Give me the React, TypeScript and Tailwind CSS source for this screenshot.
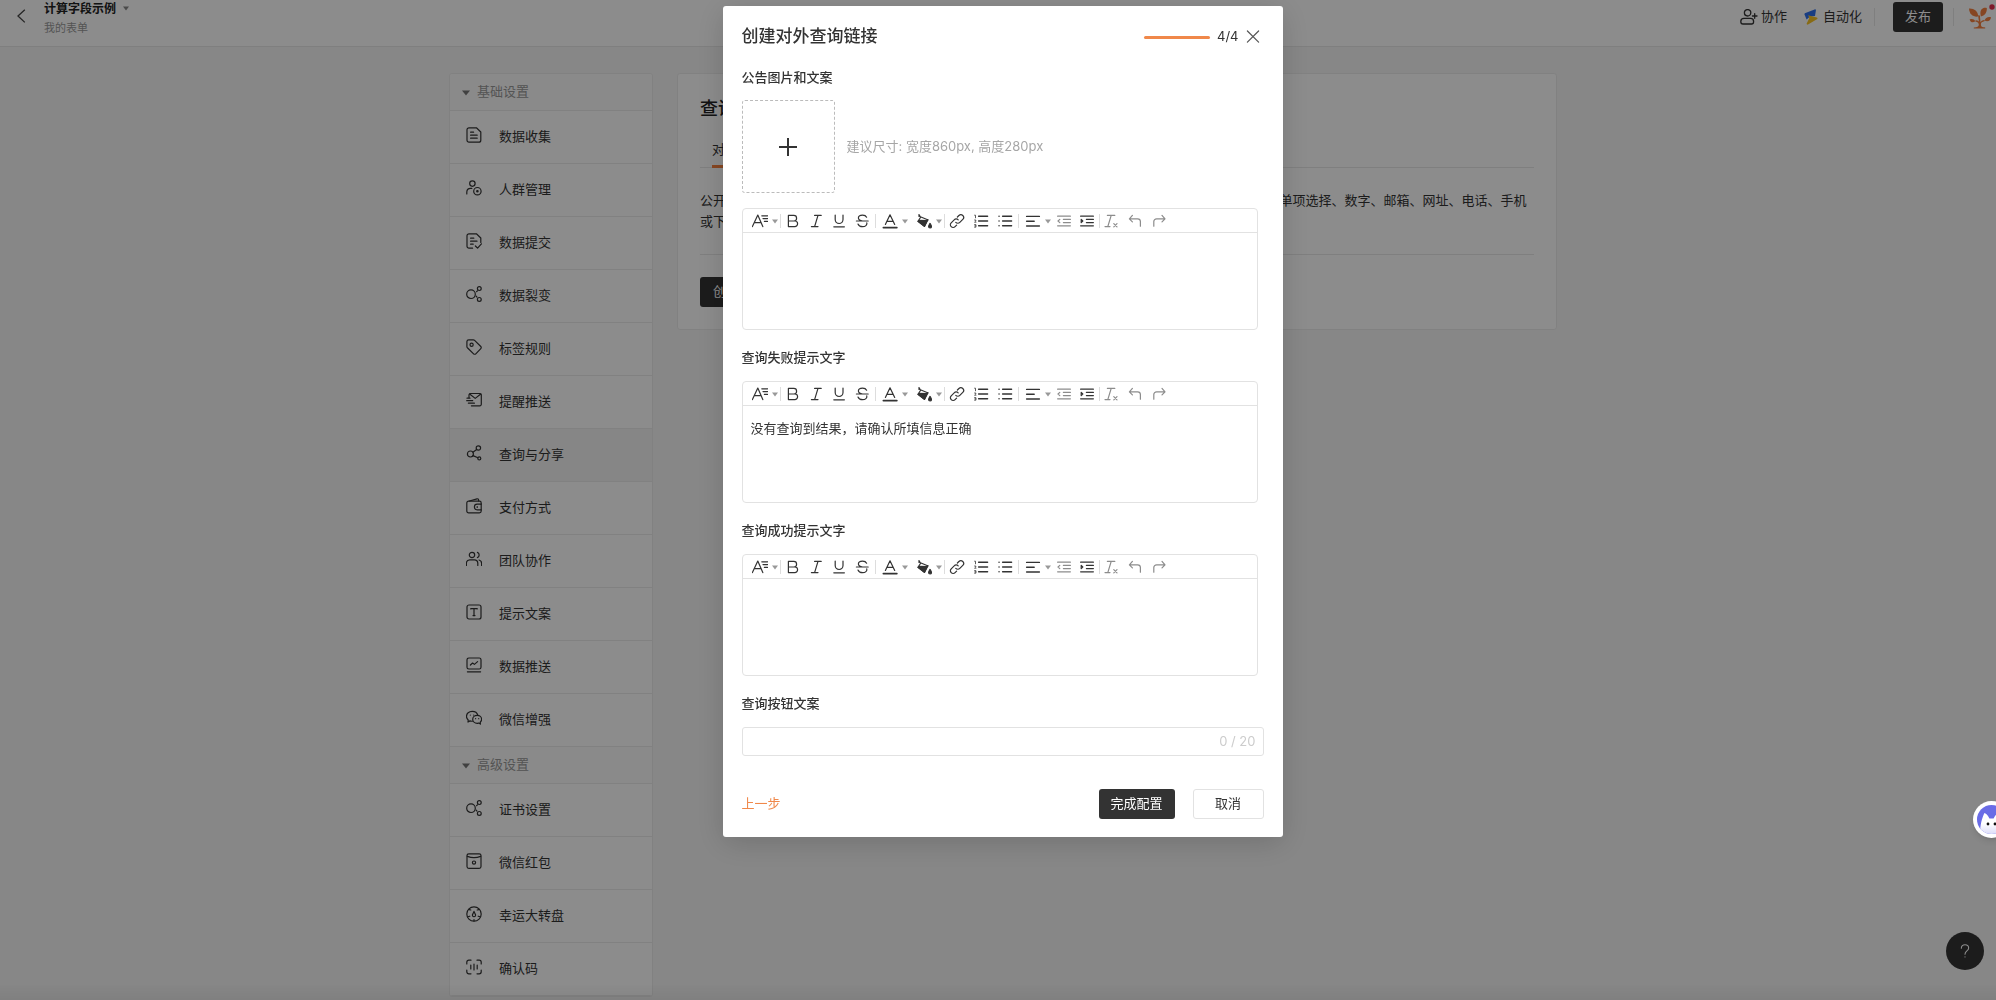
import React from "react";

type IconProps = { children: React.ReactNode; className?: string };

/** 16×16 line icon frame shared by the sidebar and the toolbars. */
function Line({ children, className = "size-4" }: IconProps) {
  return (
    <svg
      viewBox="0 0 16 16"
      className={className}
      fill="none"
      stroke="currentColor"
      strokeWidth="1.2"
      strokeLinecap="round"
      strokeLinejoin="round"
      aria-hidden="true"
    >
      {children}
    </svg>
  );
}

const orbit = (
  <>
    <circle cx="5" cy="8.2" r="4.3" />
    <circle cx="13.3" cy="2.6" r="1.9" />
    <circle cx="13.3" cy="13.4" r="1.9" />
    <path d="M11.4 4.8 10.2 6.2M10.2 10.2l1 1.2" strokeDasharray="1.2 1" />
  </>
);

const basicItems = [
  {
    label: "数据收集",
    icon: (
      <>
        <path d="M3 .8h7.4L14.8 5v8.2a2 2 0 0 1-2 2H3a2 2 0 0 1-2-2V2.8a2 2 0 0 1 2-2Z" />
        <path d="M4.6 5.2h3M4.6 8.2h6.6M4.6 11.2h6.6" />
      </>
    ),
  },
  {
    label: "人群管理",
    icon: (
      <>
        <circle cx="6.4" cy="3.6" r="2.7" />
        <path d="M.8 14V12a3.8 3.8 0 0 1 3.8-3.6h1.2" />
        <circle cx="11.4" cy="11.2" r="3.7" />
        <circle cx="11.4" cy="11.2" r=".7" fill="currentColor" />
      </>
    ),
  },
  {
    label: "数据提交",
    icon: (
      <>
        <path d="M6.6 15.2H3a2 2 0 0 1-2-2V2.8a2 2 0 0 1 2-2h7.4L14.8 5v4.4" />
        <path d="M4.6 5.2h3.2M4.6 8.2h6.4M4.6 11.2h2.6M9.4 13l2.2 2.2 3.8-4.4" />
      </>
    ),
  },
  { label: "数据裂变", icon: orbit },
  {
    label: "标签规则",
    icon: (
      <>
        <path d="M.9 2.6A1.8 1.8 0 0 1 2.7.9h4.6c.5 0 1 .2 1.3.5l6.2 6.1c.6.6.6 1.6 0 2.2l-5 5.1c-.6.6-1.6.6-2.2 0L1.4 8.7A1.8 1.8 0 0 1 .9 7.4Z" />
        <circle cx="5.6" cy="5.7" r="1.6" />
      </>
    ),
  },
  {
    label: "提醒推送",
    icon: (
      <>
        <path d="M3 5.8V3a1.5 1.5 0 0 1 1.5-1.5h9.3A1.5 1.5 0 0 1 15.3 3v9.3a1.5 1.5 0 0 1-1.5 1.5H5.4" />
        <path d="m3.6 2 5.6 4.4L14.8 2M1 6.2h3M.7 8.7h6M2.4 11.2h6" />
      </>
    ),
  },
  {
    label: "查询与分享",
    active: true,
    icon: (
      <>
        <circle cx="4.4" cy="9" r="3" />
        <circle cx="12.4" cy="3" r="2.2" />
        <circle cx="13.3" cy="13.4" r="1.5" />
        <path d="m6.9 7.2 3.8-2.8M7 10.6l4.9 2.2" />
      </>
    ),
  },
  {
    label: "支付方式",
    icon: (
      <>
        <path d="M15.2 6.2V5a1.8 1.8 0 0 0-1.8-1.8H2.6A1.8 1.8 0 0 0 .8 5v8a1.8 1.8 0 0 0 1.8 1.8h10.8a1.8 1.8 0 0 0 1.8-1.8v-1.2" />
        <path d="M3.4 3 11 .8c.9-.2 1.6.4 1.6 1.2v1M15.2 6.2h-4a2.8 2.8 0 0 0 0 5.6h4ZM11.2 8.6v.8" />
      </>
    ),
  },
  {
    label: "团队协作",
    icon: (
      <>
        <circle cx="6" cy="4" r="2.7" />
        <path d="M.4 14.4V12A3.4 3.4 0 0 1 3.8 8.8h4.6A3.4 3.4 0 0 1 11.8 12v2.4M11.4 1.4a2.8 2.8 0 0 1 0 5.2M13 9c1.6.4 2.6 1.6 2.6 3.2v2.2" />
      </>
    ),
  },
  {
    label: "提示文案",
    icon: (
      <>
        <rect x="1" y="1" width="14" height="14" rx="2" />
        <path d="M4.8 5V4.6h6.4V5M8 4.6v7M7 11.6h2" />
      </>
    ),
  },
  {
    label: "数据推送",
    icon: (
      <>
        <rect x="1" y="1" width="14" height="11" rx="1.8" />
        <path d="m4.4 8 2.2-2 1.8 1.4 3.2-2.8M1.4 14.8h13.2" />
      </>
    ),
  },
  {
    label: "微信增强",
    icon: (
      <>
        <path d="M6.4 11.2c-.9.1-1.700 0-2.400-.3L2 12l.2-2C1.200 9 .5 7.900.5 6.400.5 3.500 3 1.400 6.200 1.400c2.900 0 5 1.500 5.600 3.800" />
        <path d="M11.200 5.400c2.500 0 4.400 1.700 4.400 3.900 0 1.200-.5 2.200-1.400 2.900l.2 1.900-1.800-1c-.5.1-.9.200-1.400.200-2.500 0-4.500-1.800-4.500-4s2-3.900 4.500-3.900Z" />
        <path d="M4.300 5v.1M7.700 5v.1M9.600 8.600v.1M12.700 8.600v.1" />
      </>
    ),
  },
];

const advancedItems = [
  { label: "证书设置", icon: orbit },
  {
    label: "微信红包",
    icon: (
      <>
        <rect x="1" y=".8" width="14" height="14.600" rx="1.800" />
        <path d="M1.400 3.400c4 1.600 9.200 1.600 13.200 0" />
        <circle cx="8" cy="9.600" r="1.600" />
      </>
    ),
  },
  {
    label: "幸运大转盘",
    icon: (
      <>
        <circle cx="8" cy="8" r="7.200" />
        <path d="M8 5.400 9.400 8.400a1.600 1.600 0 1 1-2.800 0ZM3.200 3.600l1.600.4M12.800 3.600l-1.600.4M2 10.800l1.800-.6M14 10.800l-1.800-.6M8 15v-1.400" />
      </>
    ),
  },
  {
    label: "确认码",
    icon: (
      <path d="M.8 5V3.200A2 2 0 0 1 2.800 1.200H5M11 1.200h2.200a2 2 0 0 1 2 2V5M15.200 11v1.800a2 2 0 0 1-2 2H11M5 14.800H2.800a2 2 0 0 1-2-2V11M4.800 6v4M8 5v6M11.200 6v4" />
    ),
  },
];

type Item = { label: string; icon: React.ReactNode; active?: boolean };

function Group({ title, items }: { title: string; items: Item[] }) {
  return (
    <section>
      <h2 className="border-b border-[#ececec] bg-[#fcfcfc]">
        <button type="button" className="flex h-9 w-full items-center gap-[7px] pl-3 text-[#999]">
          <svg viewBox="0 0 8 6" className="mt-px h-1.5 w-2" fill="#777" aria-hidden="true">
            <path d="M0 .5h8L4 5.500Z" />
          </svg>
          {title}
        </button>
      </h2>
      <ul>
        {items.map((item) => (
          <li key={item.label} className="border-b border-[#ececec]">
            <a
              href="#"
              className={
                item.active
                  ? "flex h-13 items-center gap-[17px] bg-[#f4f4f4] pl-4"
                  : "flex h-13 items-center gap-[17px] bg-white pl-4"
              }
            >
              <Line className="mb-1 size-4">{item.icon}</Line>
              <span>{item.label}</span>
            </a>
          </li>
        ))}
      </ul>
    </section>
  );
}

function Tool({ label, muted, children }: { label: string; muted?: boolean; children: React.ReactNode }) {
  return (
    <button
      type="button"
      aria-label={label}
      className={
        muted
          ? "flex h-full w-[23px] items-center justify-center text-[#8c8c8c]"
          : "flex h-full w-[23px] items-center justify-center text-[#333]"
      }
    >
      <Line>{children}</Line>
    </button>
  );
}

function MenuTool({ label, children }: { label: string; children: React.ReactNode }) {
  return (
    <button
      type="button"
      aria-label={label}
      aria-haspopup="menu"
      className="flex h-full items-center gap-1 pr-0.5 pl-1.5 text-[#333]"
    >
      <Line>{children}</Line>
      <svg viewBox="0 0 6 5" className="mt-0.5 h-[5px] w-1.5" fill="#999" aria-hidden="true">
        <path d="M0 .5h6L3 4.500Z" />
      </svg>
    </button>
  );
}

function Divider() {
  return <span className="h-3.5 w-px bg-[#ddd]" />;
}

function Toolbar() {
  return (
    <div role="toolbar" className="flex h-6 items-center border-b border-[#e2e2e2] pl-[3px]">
      <MenuTool label="字号">
        <path d="M.4 13.600 5.800 2l5 11.600M2.400 9.600h6.800M9.800 2.800h5.800M11 5.600h4.600M12.400 8.400h3.200" />
      </MenuTool>
      <Divider />
      <div className="flex h-full px-px">
        <Tool label="加粗">
          <path d="M3.400 2.400h5.400a2.800 2.800 0 0 1 0 5.600H3.400ZM3.400 8h6.400a2.800 2.800 0 0 1 0 5.600H3.400Z" />
        </Tool>
        <Tool label="斜体">
          <path d="M6.600 2.400h6.600M3.400 13.600H10M10 2.400 6.600 13.600" />
        </Tool>
        <Tool label="下划线">
          <path d="M4.200 2v4.600a3.900 3.900 0 0 0 7.800 0V2M2.800 13.800h10.600" />
        </Tool>
        <Tool label="删除线">
          <path d="M12.600 4.200c-.6-1.200-2-2-4-2-2.400 0-4.200 1.100-4.200 2.900 0 1.900 1.900 2.500 4.200 2.900M2.400 8h11.800M12.800 9.800c.5 2.200-1.400 3.900-4.200 3.900-2.400 0-4-1-4.600-2.700" />
        </Tool>
      </div>
      <Divider />
      <MenuTool label="文字颜色">
        <path d="M3.400 11.400 8 1.800l4.700 9.600M5 8.400h6" />
        <path d="M1.400 14.600h13.400" strokeWidth="1.800" />
      </MenuTool>
      <MenuTool label="背景颜色">
        <path d="M3 1.600 4.600 4.200 2 8.400l6.400 5 3.400-6.800M2.600 3l9.600 4" />
        <path d="M3.200 7.400 11.400 7.600 8.400 13.400 2 8.400ZM14 10.400c1 1.600 1.500 2.200 1.500 3.100a1.400 1.400 0 0 1-2.900 0c0-.9.500-1.500 1.400-3.100Z" fill="currentColor" />
      </MenuTool>
      <Divider />
      <div className="flex h-full gap-px px-px">
        <Tool label="链接">
          <path d="M6.800 9.400a2.800 2.800 0 0 0 4 0l3-3a2.700 2.700 0 0 0-3.900-3.900L8.400 4" />
          <path d="M9.200 6.800a2.800 2.800 0 0 0-4 0l-3 3a2.700 2.700 0 0 0 3.900 3.900l1.500-1.500" />
        </Tool>
        <Tool label="有序列表">
          <path d="M5.600 3.200h9M5.600 8h9M5.600 12.800h9" strokeWidth="1.400" />
          <path d="M1.600 2.200h.9v2.600M1.600 7h1.200v1L1.600 9.200h1.400M1.600 11.600h1.300v2.600H1.600M1.800 12.900h1" strokeWidth=".8" />
        </Tool>
        <Tool label="无序列表">
          <path d="M5.600 3.200h9M5.600 8h9M5.600 12.800h9M2 3.200h.1M2 8h.1M2 12.800h.1" strokeWidth="1.400" />
        </Tool>
      </div>
      <Divider />
      <MenuTool label="对齐">
        <path d="M1.600 3.400h12.800M1.600 8.200h7.600M1.600 13h12.800" strokeWidth="1.400" />
      </MenuTool>
      <Tool label="减少缩进" muted>
        <path d="M1.600 3.200h12.800M7.400 6.400h7M7.400 9.600h7M1.600 12.800h12.800M3.800 6.400 2 8l1.800 1.600" />
      </Tool>
      <Tool label="增加缩进">
        <path d="M1.600 3.200h12.800M7.400 6.400h7M7.400 9.600h7M1.600 12.800h12.800M2.200 6.400 3.800 8 2.200 9.600Z" />
      </Tool>
      <Divider />
      <div className="flex h-full gap-px">
        <Tool label="清除格式" muted>
          <path d="M4.400 2.400h7.400M2 13.600h5M8.200 2.400 4.800 13.600M10.800 10.600l3.200 3.200M14 10.600l-3.200 3.200" />
        </Tool>
        <Tool label="撤销" muted>
          <path d="M5.400 2.400 2.400 5.800l3 3M2.600 5.800h8a2.800 2.800 0 0 1 2.800 2.800v4.600" />
        </Tool>
        <Tool label="重做" muted>
          <path d="m11 2.400 3 3.400-3 3M13.800 5.800H5.600a2.800 2.800 0 0 0-2.800 2.800v4.600" />
        </Tool>
      </div>
    </div>
  );
}

function Editor({ label, text = "" }: { label: string; text?: string }) {
  return (
    <div className="mr-1.5 flex h-[122px] flex-col rounded-sm border border-[#e2e2e2]">
      <Toolbar />
      <textarea
        aria-label={label}
        defaultValue={text}
        className="block w-full grow resize-none px-2 py-3 leading-5 text-[#333] outline-none"
      />
    </div>
  );
}

function Label({ children, htmlFor }: { children: React.ReactNode; htmlFor?: string }) {
  const cls = "mt-[17px] mb-[14px] block leading-5 font-medium text-[#333]";
  return htmlFor ? (
    <label htmlFor={htmlFor} className={cls}>
      {children}
    </label>
  ) : (
    <h3 className={cls}>{children}</h3>
  );
}

function TopBar() {
  return (
    <header className="flex h-[47px] items-start justify-between border-b border-[#e8e8e8] bg-white pl-4">
      <div className="flex">
        <button type="button" aria-label="返回" className="mt-2 flex h-4 w-3 items-center text-[#444]">
          <svg viewBox="0 0 10 16" className="h-4 w-2.5" fill="none" stroke="currentColor" strokeWidth="1.300" aria-hidden="true">
            <path d="M8.800 1.800 2 8l6.800 6.400" />
          </svg>
        </button>
        <div className="ml-4">
          <button type="button" className="flex h-[17px] items-center gap-[7px] text-xs font-bold text-[#222]">
            计算字段示例
            <svg viewBox="0 0 6 5" className="h-[5px] w-1.5" fill="#888" aria-hidden="true">
              <path d="M0 .5h6L3 4.500Z" />
            </svg>
          </button>
          <p className="mt-[3px] text-[11px] leading-4 text-[#999]">我的表单</p>
        </div>
      </div>
      <div className="mt-0.5 flex h-[30px] items-center">
        <button type="button" className="flex items-center gap-[3px]">
          <svg viewBox="0 0 18 16" className="h-4 w-[18px]" fill="none" stroke="currentColor" strokeWidth="1.300" strokeLinecap="round" aria-hidden="true">
            <circle cx="7.600" cy="3.800" r="3.200" />
            <path d="M4 9.400h6.600c1.800 0 3 1.200 3 3 0 1.500-.8 2.600-2 2.600H3c-1.300 0-2.200-1.100-2.200-2.600 0-1.800 1.400-3 3.200-3ZM12.400 7h4.600M14.700 4.700v4.600" />
          </svg>
          协作
        </button>
        <button type="button" className="ml-4 flex items-center gap-1">
          <svg viewBox="0 0 16 16" className="size-4" aria-hidden="true">
            <path d="M1.800 4.200 11.600.4c.8-.3 1.400.3 1.300 1L12 7 7 7.600 3.600 10.400 1.400 5.200Z" fill="#2f6fed" />
            <path d="M5 6.200 13.800 8.400c.7.200.9.900.5 1.500L5 15.600c-.8.300-1.500-.2-1.300-1L6.400 9Z" fill="#f7c325" />
          </svg>
          自动化
        </button>
        <span className="ml-3 h-[18px] w-px bg-[#e8e8e8]" />
        <button type="button" className="ml-[18px] h-[30px] w-[50px] rounded-[3px] bg-[#333] text-white">
          发布
        </button>
        <span className="mx-2.5 h-[18px] w-px bg-[#e8e8e8]" />
        <button type="button" aria-label="账户" className="ml-1 flex w-7 items-center">
          <svg viewBox="0 0 27 26" className="h-[26px] w-[27px]" aria-hidden="true">
            <g fill="#f5803e">
              <path d="M1 4.600c5-.3 9 2.400 9.200 8C5 13.200 1.400 10.600 1 4.600Z" />
              <path d="M12.400 9.400C12.200 5.600 14.800 3 18.800 4c.3 4.600-2.200 8-6 8.400Z" />
              <path d="M1.600 15.400c2.600-1 4.800-.4 5.600 1.800-2 1.800-4.600 1.400-5.600-1.800ZM16.600 16.600c.8-2.800 3.200-4.200 6.400-3.400-.4 3.400-3 5-6.400 3.400Z" />
              <path d="M5.800 24.600h11.400v-1.200c-3.200 0-4.300-.6-4.300-3.400 0-1.200 1-2.200 3.900-3l-.4-1c-2.200.4-3.300 1-3.900 2.200l-.6-6.800-1.800-.2.800 6.200c-1-.8-2-1.200-3.300-1.200l-.3 1.200c2.800.6 3.500 1.800 3.500 3.400 0 2-1.600 2.600-5 2.600Z" />
            </g>
            <circle cx="24" cy="3" r="2.700" fill="#e8304f" />
          </svg>
        </button>
      </div>
    </header>
  );
}

function Modal() {
  return (
    <div className="fixed inset-0 flex items-start justify-center bg-black/45 pt-1.5 pl-[9px]">
      <div
        role="dialog"
        aria-modal="true"
        aria-labelledby="dialog-title"
        className="w-full max-w-[560px] rounded-[3px] bg-white px-[19px] pt-[21px] pb-[18px] shadow-[0_6px_30px_rgba(0,0,0,0.16)]"
      >
        <div className="flex h-5 items-center pr-[3px]">
          <h1 id="dialog-title" className="grow text-[17px] font-medium text-[#333]">
            创建对外查询链接
          </h1>
          <span className="h-[3px] w-[66px] rounded-full bg-[#f0884a]" />
          <span className="ml-[7px]">4/4</span>
          <button type="button" aria-label="关闭" className="ml-1.5 text-[#555]">
            <Line>
              <path d="m2.400 2 11.200 11.200M13.600 2 2.400 13.200" />
            </Line>
          </button>
        </div>

        <h3 className="mt-5 mb-[13px] leading-5 font-medium text-[#333]">公告图片和文案</h3>
        <div className="mb-[15px] flex items-center gap-3">
          <button
            type="button"
            aria-label="上传图片"
            className="flex size-[93px] items-center justify-center rounded-[3px] border border-dashed border-[#bbb] text-[#333]"
          >
            <svg viewBox="0 0 18 18" className="size-[18px]" fill="currentColor" aria-hidden="true">
              <path d="M8 0h2v8h8v2h-8v8H8v-8H0V8h8Z" />
            </svg>
          </button>
          <p className="text-[#a6a6a6]">建议尺寸: 宽度860px, 高度280px</p>
        </div>
        <Editor label="公告文案" />

        <Label>查询失败提示文字</Label>
        <Editor label="查询失败提示文字" text="没有查询到结果，请确认所填信息正确" />

        <Label>查询成功提示文字</Label>
        <Editor label="查询成功提示文字" />

        <Label htmlFor="button-text">查询按钮文案</Label>
        <div className="flex h-[29px] items-center rounded-[3px] border border-[#e2e2e2] px-[7px]">
          <input id="button-text" type="text" maxLength={20} className="min-w-0 grow outline-none" />
          <span className="text-[#ccc]">0 / 20</span>
        </div>

        <div className="mt-[33px] flex items-center">
          <button type="button" className="mr-auto text-[#f0884a]">
            上一步
          </button>
          <button type="button" className="h-[30px] w-[76px] rounded-[3px] bg-[#333] text-white">
            完成配置
          </button>
          <button type="button" className="ml-[18px] h-[30px] w-[71px] rounded-[3px] border border-[#e2e2e2]">
            取消
          </button>
        </div>
      </div>
    </div>
  );
}

export default function App() {
  return (
    <div className="min-h-screen bg-[#f6f6f6] font-['Inter','Noto_Sans_CJK_SC',sans-serif] text-[13px] text-[#333]">
      <TopBar />
      <main className="flex items-start justify-center gap-6 pt-[26px] pl-[10px]">
        <nav className="w-[204px] overflow-hidden rounded-[3px] border border-[#ececec]">
          <Group title="基础设置" items={basicItems} />
          <Group title="高级设置" items={advancedItems} />
        </nav>
        <section className="w-full max-w-[880px] rounded-[3px] border border-[#ececec] bg-white px-[22px] pt-[21px] pb-[22px]">
          <h1 className="text-lg leading-7 font-medium text-[#222]">查询与分享</h1>
          <div className="mt-2 flex border-b border-[#e8e8e8]">
            <a href="#" className="-mb-px ml-3 border-b-[3px] border-[#f5803e] pt-2 pb-1.5 leading-5">
              对外查询
            </a>
          </div>
          <p className="mt-[22px] border-b border-[#e8e8e8] pb-[22px] leading-[21px]">
            公开查询可生成对外查询的链接，访问者填写查询条件后即可查看对应的数据结果: 查询条件支持设为单项选择、数字、邮箱、网址、电话、手机或下拉框字段。
          </p>
          <button type="button" className="mt-[22px] block h-[30px] rounded-[3px] bg-[#333] px-[13px] text-white">
            创建查询链接
          </button>
        </section>
      </main>

      <button
        type="button"
        aria-label="帮助"
        className="fixed right-3 bottom-[30px] flex size-[38px] items-center justify-center rounded-full bg-[#333] text-white"
      >
        <svg viewBox="0 0 12 18" className="h-4 w-2.5" fill="none" stroke="currentColor" strokeWidth="1.300" strokeLinecap="round" aria-hidden="true">
          <path d="M1.600 5.600C1.600 3 3.400 1.400 6 1.400s4.400 1.600 4.400 4c0 3.400-4.400 3.600-4.400 7.400M6 16v.2" />
        </svg>
      </button>

      <Modal />
      <div className="pointer-events-none fixed inset-x-0 bottom-0 h-4 bg-linear-to-b from-transparent to-black/5" />

      <button
        type="button"
        aria-label="助手"
        className="fixed -right-3.5 bottom-[162px] size-[37px] overflow-hidden rounded-full bg-white p-1 shadow-md"
      >
        <svg viewBox="0 0 29 29" className="block size-full" aria-hidden="true">
          <defs>
            <linearGradient id="face" x1="0" y1="0" x2="0" y2="1">
              <stop offset="0.500" stopColor="#fff" />
              <stop offset="1" stopColor="#dcdcf8" />
            </linearGradient>
            <clipPath id="disc">
              <circle cx="14.500" cy="14.500" r="14.500" />
            </clipPath>
          </defs>
          <g clipPath="url(#disc)">
            <rect width="29" height="29" fill="#6a6ce6" />
            <path d="M3 29C3 20 5 13 7.400 8c2 .8 4 3 5 5.600h4.200c1-2.600 3-4.800 5-5.600C24 13 26 20 26 29Z" fill="url(#face)" />
            <circle cx="11" cy="19" r="1.400" fill="#111" />
            <circle cx="18" cy="19" r="1.400" fill="#111" />
          </g>
        </svg>
      </button>
    </div>
  );
}
